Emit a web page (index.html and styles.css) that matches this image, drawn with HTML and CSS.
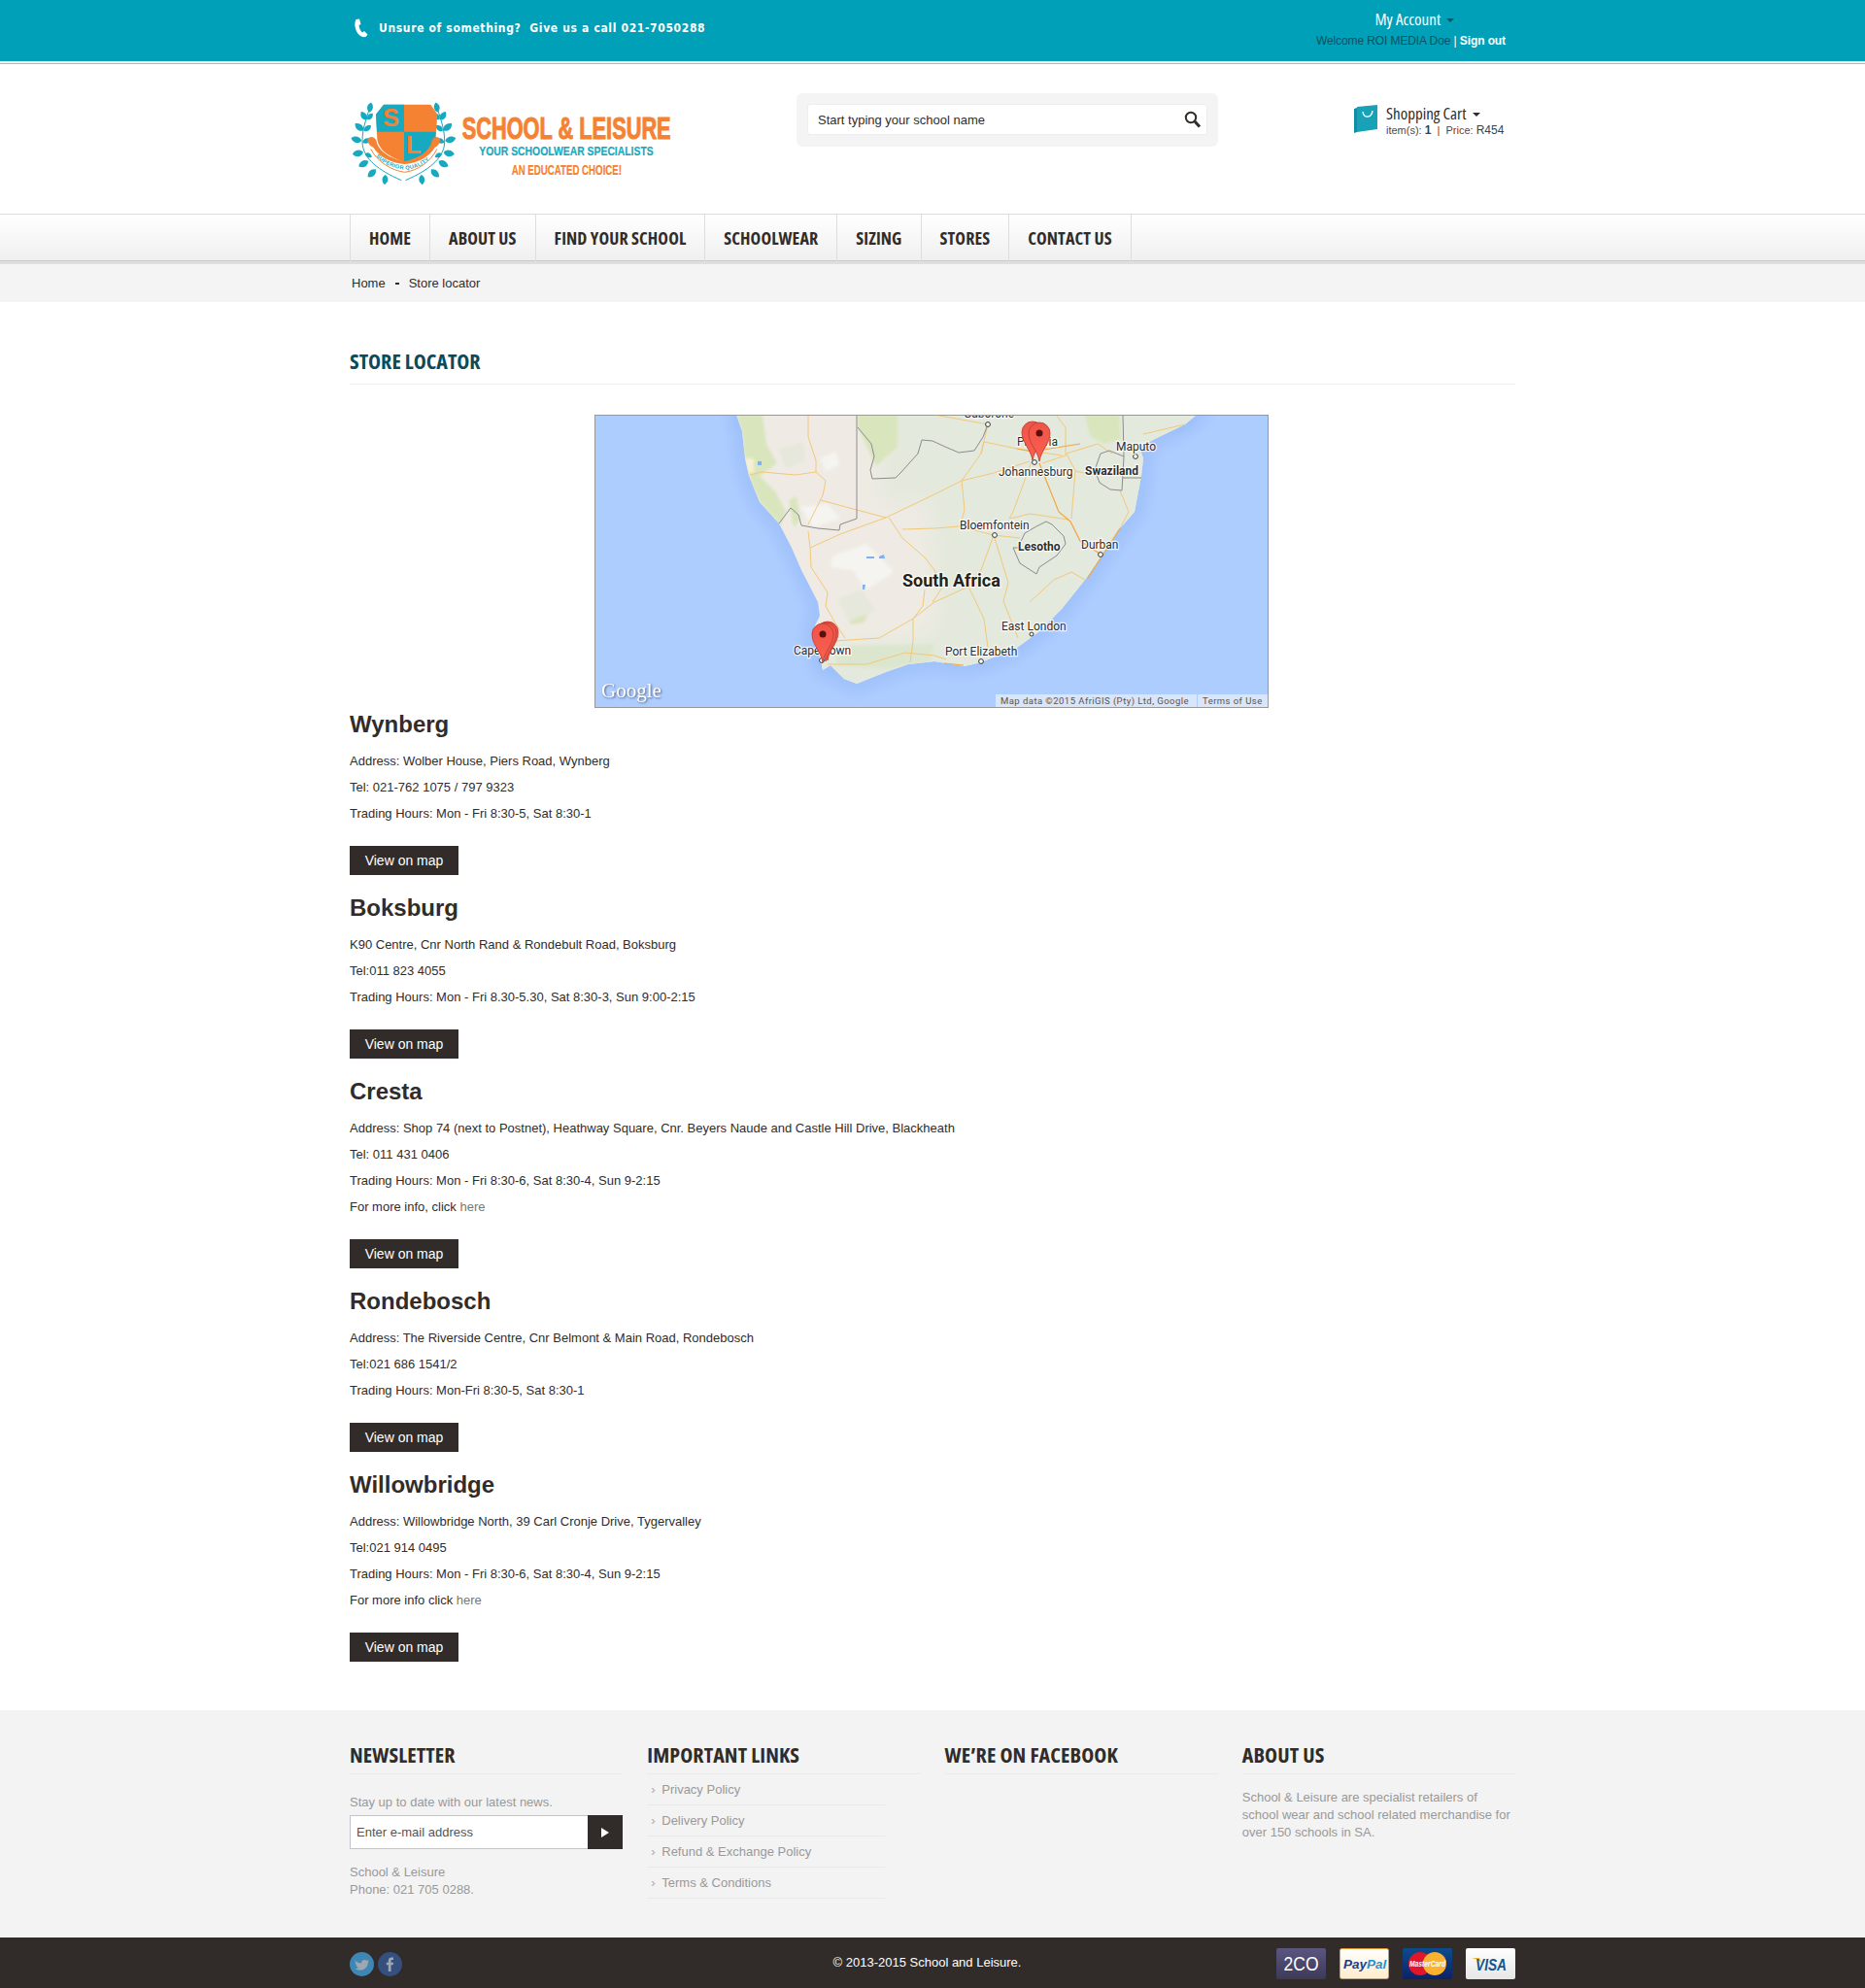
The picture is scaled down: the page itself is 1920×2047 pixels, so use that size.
FILE: index.html
```
<!DOCTYPE html>
<html lang="en">
<head>
<meta charset="utf-8">
<title>Store locator - School &amp; Leisure</title>
<link rel="stylesheet" href="styles.css">
</head>
<body>
<div class="topbar">
  <div class="wrap topbar-in">
    <div class="call">
      <svg class="phone" width="16" height="20" viewBox="0 0 16 20"><path d="M2.5 1 L6 0.5 L7.5 6 L5.5 7 C5.8 10 7 12.5 9 14.5 L11 13 L14.5 16.5 L12.5 19 C8 20 3.5 16 2 10.5 C1 7 1.2 3.5 2.5 1Z"/></svg>
      <span>Unsure of something?&nbsp; Give us a call 021-7050288</span>
    </div>
    <div class="account">
      <div class="acc-title">My Account <i class="caret caret-dark"></i></div>
      <div class="acc-line">Welcome ROI MEDIA Doe <span class="sep">|</span> <a class="signout">Sign out</a></div>
    </div>
  </div>
</div>

<header class="wrap head">
  <svg class="logo" width="345" height="105" viewBox="0 0 1035 315">
    <defs>
      <path id="leaf" d="M0 0 C8 -14 24 -14 34 0 C24 12 8 12 0 0Z"/>
      <g id="branch">
        <path class="logo-stem" d="M78 45 C65 85 50 125 55 165 C62 205 100 240 175 272"/>
        <use href="#leaf" transform="translate(76 62) rotate(-80) scale(.9)"/>
        <use href="#leaf" transform="translate(68 85) rotate(-125) scale(.9)"/>
        <use href="#leaf" transform="translate(70 85) rotate(-50) scale(.75)"/>
        <use href="#leaf" transform="translate(58 118) rotate(-140)"/>
        <use href="#leaf" transform="translate(60 120) rotate(-40) scale(.8)"/>
        <use href="#leaf" transform="translate(52 150) rotate(-165)"/>
        <use href="#leaf" transform="translate(55 155) rotate(-20) scale(.8)"/>
        <use href="#leaf" transform="translate(57 185) rotate(170)"/>
        <use href="#leaf" transform="translate(62 190) rotate(25) scale(.7)"/>
        <use href="#leaf" transform="translate(72 212) rotate(150)"/>
        <use href="#leaf" transform="translate(95 238) rotate(135)"/>
        <use href="#leaf" transform="translate(125 255) rotate(95) scale(.9)"/>
      </g>
    </defs>
    <g class="logo-teal"><use href="#branch"/><use href="#branch" transform="translate(362 0) scale(-1 1)"/></g>
    <path class="logo-orange" d="M96 68 L120 38 L265 38 L286 68 L280 145 C275 185 220 205 185 216 C150 205 105 185 100 145Z"/>
    <path class="logo-teal" d="M96 68 L120 38 L183 38 L183 122 L99 122Z"/>
    <path class="logo-teal" d="M183 122 L281 122 L280 145 C275 185 220 205 183 216Z"/>
    <text class="logo-sl" x="142" y="105">S</text>
    <text class="logo-sl" x="212" y="190">L</text>
    <path class="logo-band" d="M78 150 C90 200 140 232 185 240 C230 232 276 200 288 150 L268 175 C250 200 215 212 185 216 C155 212 120 200 96 175Z"/>
    <path class="logo-ribbon" d="M70 150 C70 134 94 134 98 152 C104 185 150 208 185 213 C220 208 262 185 268 152 C272 134 294 134 294 150 C292 160 286 168 278 170 C262 200 220 220 185 222 C150 220 105 200 88 170 C80 168 72 160 70 150Z"/>
    <path class="logo-line" d="M80 175 C100 215 145 242 185 247 C225 242 265 215 285 175"/>
    <path id="ribbon-arc" class="logo-none" d="M92 193 C118 222 150 236 185 239 C222 236 252 222 276 192"/>
    <text class="logo-sq"><textPath href="#ribbon-arc" startOffset="3%">SUPERIOR QUALITY</textPath></text>
    <text class="logo-t1" x="362" y="143" textLength="645" lengthAdjust="spacingAndGlyphs">SCHOOL &amp; LEISURE</text>
    <text class="logo-t2" x="415" y="195" textLength="538" lengthAdjust="spacingAndGlyphs">YOUR SCHOOLWEAR SPECIALISTS</text>
    <text class="logo-t3" x="515" y="255" textLength="340" lengthAdjust="spacingAndGlyphs">AN EDUCATED CHOICE!</text>
  </svg>
  <div class="search">
    <div class="search-field">
      <span>Start typing your school name</span>
      <svg width="18" height="18" viewBox="0 0 18 18"><circle class="s-ring" cx="7" cy="7" r="5.2"/><path class="s-handle" d="M11 11 L16 16.5"/></svg>
    </div>
  </div>
  <div class="cart">
    <svg class="bag" width="26" height="30" viewBox="0 0 26 30">
      <path class="bag-side" d="M0 5 L3 4 L3 29 L0 30Z"/>
      <path class="bag-main" d="M3 3 L24 1 L24 26 L3 29Z"/>
      <path class="bag-handle" d="M9 8 C10 15 18 15 19 7"/>
    </svg>
    <div>
      <div class="cart-title">Shopping Cart <i class="caret"></i></div>
      <div class="cart-line">item(s): <b>1</b> &nbsp;|&nbsp; Price: <strong>R454</strong></div>
    </div>
  </div>
</header>

<nav class="nav">
  <ul class="wrap nav-list">
    <li>HOME</li><li>ABOUT US</li><li>FIND YOUR SCHOOL</li><li>SCHOOLWEAR</li><li>SIZING</li><li>STORES</li><li>CONTACT US</li>
  </ul>
</nav>
<div class="crumbs"><div class="wrap crumbs-in"><span>Home</span><i class="crumb-dot"></i><span>Store locator</span></div></div>

<main class="wrap main">
  <h1 class="page-title">STORE LOCATOR</h1>
  <svg class="map" width="694" height="302" viewBox="0 0 694 302">
    <defs>
      <path id="land" d="M146 0 L152 17 L155 45 L159 63 L170 90 L190 112 L203 137 L213 160 L230 193 L232 207 L227 217 L225 230 L233 253 L235 263 L243 258 L257 272 L270 277 L300 265 L323 257 L350 254 L381 259 L398 255 L435 240 L458 223 L481 200 L505 170 L521 147 L541 117 L556 100 L563 63 L565 45 L561 33 L581 23 L608 10 L620 0Z"/>
      <clipPath id="landclip"><use href="#land"/></clipPath>
      <filter id="glow" x="-20%" y="-20%" width="140%" height="140%"><feGaussianBlur stdDeviation="9"/></filter>
      <filter id="soft" x="-10%" y="-10%" width="120%" height="120%"><feGaussianBlur stdDeviation="1.4"/></filter>
      <filter id="softer" x="-10%" y="-10%" width="120%" height="120%"><feGaussianBlur stdDeviation="12"/></filter>
      <linearGradient id="pinfill" x1="0" y1="0" x2="0" y2="1"><stop offset="0" stop-color="#ee5548"/><stop offset="1" stop-color="#fb5f50"/></linearGradient>
      <g id="pin"><path class="pin" d="M0 0 C-2 -12 -11 -18 -11 -29 A11 11 0 1 1 11 -29 C11 -18 2 -12 0 0Z"/><circle class="pin-dot" cx="0" cy="-29" r="3.5"/></g>
    </defs>
    <rect class="m-water" width="694" height="302"/>
    <use href="#land" class="m-glow" filter="url(#glow)"/>
    <use href="#land" class="m-land"/>
    <g clip-path="url(#landclip)">
      <path class="m-east" filter="url(#softer)" d="M295 -40 L295 95 L345 85 L350 175 L355 215 L330 232 L220 240 L225 340 L720 340 L720 -40Z"/>
      <g filter="url(#soft)">
        <path class="m-green" d="M146 0 L173 0 L177 30 L188 50 L170 63 L187 80 L197 100 L192 114 L170 90 L159 63 L155 45 L152 17Z"/>
        <path class="m-green" d="M271 0 L312 0 L312 33 L290 53 L271 13Z"/>
        <path class="m-green" d="M505 0 L540 0 L542 25 L525 30 L510 22Z"/>
        <path class="m-green" d="M200 88 L208 84 L212 108 L205 116Z"/>
        <path class="m-green" d="M260 208 L282 203 L278 214 L264 216Z"/>
        <path class="m-green2" d="M245 238 L350 236 L345 254 L300 262 L250 258Z"/>
        <path class="m-white" d="M245 146 L280 133 L308 162 L280 180 L266 160 L243 157Z"/>
        <path class="m-white" d="M212 95 L240 92 L253 107 L225 116Z"/>
        <path class="m-white" d="M233 45 L248 38 L252 52 L238 58Z"/>
        <path class="m-dim" d="M190 35 L215 28 L218 48 L196 55Z"/>
        <path class="m-dim" d="M250 190 L275 180 L290 202 L262 212Z"/>
        <path class="m-yellow" d="M155 45 L164 45 L164 60 L159 60Z"/>
      </g>
      <path class="m-lake" d="M168 48 L172 48 L172 52 L168 52Z"/>
      <path class="m-lake" d="M280 146 L288 146 L288 148 L280 148Z"/>
      <path class="m-lake" d="M293 146 L298 144 L299 148 L293 148Z"/>
      <path class="m-lake" d="M276 175 L279 175 L278 180 L276 180Z"/>
    </g>
    <g class="m-road">
      <path d="M160 62 L172 59 L207 62 L228 59 L238 68 L235 83 L220 113"/>
      <path d="M220 0 L220 23 L228 47 L228 59"/>
      <path d="M233 88 L270 98 L300 106 L350 82 L378 68 L411 60 L448 48"/>
      <path d="M222 137 L253 123 L300 106"/>
      <path d="M220 120 L222 137 L223 157 L240 183 L238 197 L247 213 L258 230"/>
      <path d="M303 106 L317 127 L340 147 L350 160 L358 178 L348 193"/>
      <path d="M317 118 L350 117 L376 115 L411 124 L438 127"/>
      <path d="M247 233 L293 230 L328 210 L350 193 L385 177"/>
      <path d="M328 210 L328 233 L325 255"/>
      <path d="M340 180 L338 197 L328 210"/>
      <path d="M240 257 L280 257 L320 245 L350 248 L362 252"/>
      <path d="M378 68 L381 98 L376 115"/>
      <path d="M450 48 L431 100 L427 107"/>
      <path d="M428 107 L448 102 L488 108"/>
      <path d="M411 124 L398 160 L385 177 L401 210 L406 247"/>
      <path d="M411 124 L423 163 L426 173 L421 192 L436 230"/>
      <path d="M448 193 L473 170 L491 162 L505 170"/>
      <path d="M541 117 L550 100 L541 78"/>
      <path d="M486 40 L518 30 L533 40"/>
      <path d="M461 50 L485 42 L485 13 L475 0"/>
      <path d="M486 40 L495 58 L491 107"/>
      <path d="M398 40 L378 68"/>
      <path d="M495 58 L518 63"/>
      <path d="M565 20 L608 10"/>
      <path d="M405 10 L398 40 L401 28 L435 35 L481 42"/>
      <path d="M350 0 L405 10"/>
    </g>
    <g class="m-road2">
      <path d="M458 50 L478 100 L490 110 L500 130 L520 143"/>
      <path d="M508 168 L541 117"/>
      <path d="M435 35 L450 38 L500 30"/>
      <path d="M360 256 L380 258"/>
    </g>
    <g class="m-border">
      <path d="M270 0 L270 107 L253 113 L252 119 L230 117 L213 114 L210 103 L202 96 L190 112"/>
      <path d="M271 13 L285 30 L288 43 L284 57 L286 66 L310 65 L315 60 L333 40 L337 26 L348 27 L361 33 L375 39 L391 37 L400 23 L405 10"/>
      <path d="M544 0 L545 43 L530 37 L521 40 L515 57 L520 70 L531 77 L543 78 L545 43 M544 65 L563 65"/>
      <path d="M465 110 L455 115 L443 122 L436 137 L431 137 L438 153 L455 164 L458 157 L476 145 L485 133 L483 125 L471 113Z"/>
    </g>
    <g class="m-town">
      <circle cx="405" cy="10" r="2.4"/><circle cx="453" cy="49" r="2.4"/><circle cx="557" cy="43" r="2.4"/><circle cx="412" cy="124" r="2.4"/><circle cx="521" cy="144" r="2.4"/><circle cx="450" cy="226" r="2"/><circle cx="398" cy="254" r="2.4"/><circle cx="234" cy="253" r="2.4"/>
    </g>
    <g class="m-label">
      <text x="380" y="3">Gaborone</text>
      <text x="435" y="32">Pretoria</text>
      <text x="416" y="63">Johannesburg</text>
      <text x="537" y="37">Maputo</text>
      <text x="376" y="118">Bloemfontein</text>
      <text x="501" y="138">Durban</text>
      <text x="419" y="222">East London</text>
      <text x="361" y="248">Port Elizabeth</text>
      <text x="205" y="247">Cape Town</text>
      <text class="m-b" x="505" y="62">Swaziland</text>
      <text class="m-b" x="436" y="140">Lesotho</text>
      <text class="m-sa" x="317" y="177">South Africa</text>
    </g>
    <use href="#pin" transform="translate(240 253)"/>
    <use href="#pin" transform="translate(238 254)"/>
    <use href="#pin" transform="translate(235 255)"/>
    <use href="#pin" transform="translate(451 47)"/>
    <use href="#pin" transform="translate(458 48)"/>
    <text class="m-google" x="7" y="291">Google</text>
    <rect class="m-attr" x="413" y="288" width="207" height="13"/>
    <rect class="m-attr" x="621" y="288" width="72" height="13"/>
    <text class="m-attr-t" x="418" y="298">Map data ©2015 AfriGIS (Pty) Ltd, Google</text>
    <text class="m-attr-t" x="626" y="298">Terms of Use</text>
    <rect class="m-frame" x=".5" y=".5" width="693" height="301"/>
  </svg>

  <section class="store">
    <h2>Wynberg</h2>
    <p>Address: Wolber House, Piers Road, Wynberg</p>
    <p>Tel: 021-762 1075 / 797 9323</p>
    <p>Trading Hours: Mon - Fri 8:30-5, Sat 8:30-1</p>
    <a class="btn">View on map</a>
  </section>
  <section class="store">
    <h2>Boksburg</h2>
    <p>K90 Centre, Cnr North Rand &amp; Rondebult Road, Boksburg</p>
    <p>Tel:011 823 4055</p>
    <p>Trading Hours: Mon - Fri 8.30-5.30, Sat 8:30-3, Sun 9:00-2:15</p>
    <a class="btn">View on map</a>
  </section>
  <section class="store">
    <h2>Cresta</h2>
    <p>Address: Shop 74 (next to Postnet), Heathway Square, Cnr. Beyers Naude and Castle Hill Drive, Blackheath</p>
    <p>Tel: 011 431 0406</p>
    <p>Trading Hours: Mon - Fri 8:30-6, Sat 8:30-4, Sun 9-2:15</p>
    <p>For more info, click <a class="here">here</a></p>
    <a class="btn">View on map</a>
  </section>
  <section class="store">
    <h2>Rondebosch</h2>
    <p>Address: The Riverside Centre, Cnr Belmont &amp; Main Road, Rondebosch</p>
    <p>Tel:021 686 1541/2</p>
    <p>Trading Hours: Mon-Fri 8:30-5, Sat 8:30-1</p>
    <a class="btn">View on map</a>
  </section>
  <section class="store">
    <h2>Willowbridge</h2>
    <p>Address: Willowbridge North, 39 Carl Cronje Drive, Tygervalley</p>
    <p>Tel:021 914 0495</p>
    <p>Trading Hours: Mon - Fri 8:30-6, Sat 8:30-4, Sun 9-2:15</p>
    <p>For more info click <a class="here">here</a></p>
    <a class="btn">View on map</a>
  </section>
</main>

<footer class="foot">
  <div class="wrap foot-grid">
    <div>
      <h3>NEWSLETTER</h3>
      <p class="news-intro">Stay up to date with our latest news.</p>
      <div class="news-form"><span>Enter e-mail address</span><b class="news-go"><i></i></b></div>
      <p class="news-addr">School &amp; Leisure<br>Phone: 021 705 0288.</p>
    </div>
    <div>
      <h3>IMPORTANT LINKS</h3>
      <ul class="links">
        <li>Privacy Policy</li><li>Delivery Policy</li><li>Refund &amp; Exchange Policy</li><li>Terms &amp; Conditions</li>
      </ul>
    </div>
    <div>
      <h3>WE’RE ON FACEBOOK</h3>
    </div>
    <div>
      <h3>ABOUT US</h3>
      <p class="about">School &amp; Leisure are specialist retailers of school wear and school related merchandise for over 150 schools in SA.</p>
    </div>
  </div>
</footer>
<div class="bottom">
  <div class="wrap bottom-in">
    <div class="social">
      <svg width="25" height="25" viewBox="0 0 25 25"><circle class="tw" cx="12.5" cy="12.5" r="12.5"/><path class="soc-g" d="M5 8 C7 10 9 11.5 12 11.5 C12 8.5 15 7 17.3 8.8 L19.5 8 L18.5 10 L20 9.7 L18.7 11.2 C18.7 15 15.5 18.5 11 18.5 C9 18.5 7 18 5.5 17 C7.2 17 8.6 16.6 9.5 15.8 C8 15.7 7 14.8 6.5 13.7 L8 13.6 C6.5 13 5.6 11.8 5.6 10.4 L7 10.8 C5.8 10 5.2 9 5 8Z"/></svg>
      <svg width="25" height="25" viewBox="0 0 25 25"><circle class="fb" cx="12.5" cy="12.5" r="12.5"/><path class="soc-g" d="M10.8 20 V13.3 H8.8 V10.8 H10.8 V9 C10.8 6.8 12 5.6 14 5.6 H16 V8.1 H14.7 C13.8 8.1 13.5 8.5 13.5 9.3 V10.8 H16 L15.6 13.3 H13.5 V20Z"/></svg>
    </div>
    <div class="copy">© 2013-2015 School and Leisure.</div>
    <div class="pays">
      <svg width="51" height="32" viewBox="0 0 51 32"><defs><linearGradient id="g2co" x1="0" y1="0" x2="0" y2="1"><stop offset="0" stop-color="#5a5680"/><stop offset="1" stop-color="#3d3958"/></linearGradient></defs><rect class="p-2co" width="51" height="32" rx="2"/><text class="p-2co-t" x="7.5" y="23" textLength="36" lengthAdjust="spacingAndGlyphs">2CO</text></svg>
      <svg width="51" height="32" viewBox="0 0 51 32"><defs><linearGradient id="gpp" x1="0" y1="0" x2="0" y2="1"><stop offset="0" stop-color="#ffffff"/><stop offset="1" stop-color="#ffeccb"/></linearGradient></defs><rect class="p-pp" x=".5" y=".5" width="50" height="31" rx="2"/><text class="p-pp-t" x="4" y="21">Pay<tspan class="p-pal">Pal</tspan></text></svg>
      <svg width="51" height="32" viewBox="0 0 51 32"><defs><linearGradient id="gmc" x1="0" y1="0" x2="0" y2="1"><stop offset="0" stop-color="#0c4c8c"/><stop offset="1" stop-color="#0c2268"/></linearGradient></defs><rect class="p-mc" width="51" height="32" rx="2"/><circle class="p-mc-r" cx="18" cy="16" r="12"/><circle class="p-mc-y" cx="33" cy="16" r="12"/><text class="p-mc-t" x="7" y="19" textLength="37" lengthAdjust="spacingAndGlyphs">MasterCard</text></svg>
      <svg width="51" height="32" viewBox="0 0 51 32"><defs><linearGradient id="gvi" x1="0" y1="0" x2="0" y2="1"><stop offset="0" stop-color="#ffffff"/><stop offset="1" stop-color="#e6e6e6"/></linearGradient></defs><rect class="p-vi" width="51" height="32" rx="2"/><path class="p-vi-y" d="M6 10 L14 10 L17 16 C15 13 11 11 6 10Z"/><text class="p-vi-t" x="10" y="23" textLength="32" lengthAdjust="spacingAndGlyphs">VISA</text></svg>
    </div>
  </div>
</div>
</body>
</html>
```
FILE: styles.css
```
* { box-sizing: border-box; }
html, body { margin: 0; padding: 0; }
body { background: #fff; color: #312c29; font-family: "Liberation Sans", Arial, sans-serif; font-size: 13px; }
ul { list-style: none; margin: 0; padding: 0; }
h1, h2, h3, p { margin: 0; }
.wrap { width: 1200px; margin-left: auto; margin-right: auto; }

.topbar { height: 66px; background: #00a0b8; border-bottom: 1px solid #b5b5b5; box-shadow: inset 0 -2px 0 #fff; }
.topbar-in { display: flex; justify-content: space-between; height: 63px; }
.call { display: flex; align-items: center; padding: 0 0 5px 4px; color: #fff; font-family: "DejaVu Sans", sans-serif; font-stretch: condensed; font-weight: 700; font-size: 12px; letter-spacing: .65px; }
.phone { margin-right: 10px; fill: #fff; }
.account { padding: 9px 10px 0 0; text-align: center; }
.acc-title, .cart-title, .nav-list li, .page-title, .foot h3 { font-family: "Open Sans", sans-serif; font-stretch: 75%; }
.acc-title { color: #fff; font-size: 17px; line-height: 22px; padding-left: 8px; }
.acc-line { color: #12505e; font-size: 12px; line-height: 18px; margin-top: 2px; letter-spacing: -.1px; }
.sep { color: #fff; }
.signout { color: #fff; font-weight: 700; }
.caret { display: inline-block; width: 0; height: 0; margin-left: 3px; vertical-align: middle; border-left: 4px solid transparent; border-right: 4px solid transparent; border-top: 4px solid #312c29; }
.caret-dark { border-top-color: #12505e; }

.head { position: relative; height: 154px; display: flex; align-items: flex-start; }
.logo { margin: 29px 0 0 -5px; flex: none; }
.logo-teal { fill: #17a9bf; }
.logo-orange, .logo-ribbon { fill: #f58233; }
.logo-band { fill: #fff; }
.logo-line { fill: none; stroke: #f58233; stroke-width: 3; }
.logo-stem { fill: none; stroke: #17a9bf; stroke-width: 3; }
.logo-sl { fill: #f58233; font: 700 76px "Liberation Sans", sans-serif; text-anchor: middle; }
.logo-none { fill: none; }
.logo-sq { fill: #17a9bf; font: 700 17px "Liberation Sans", sans-serif; letter-spacing: 1px; }
.logo-t1 { fill: #f58233; stroke: #f58233; stroke-width: 3; font: 700 92px "Liberation Sans", sans-serif; }
.logo-t2 { fill: #17a9bf; stroke: #17a9bf; stroke-width: .6; font: 700 39px "Liberation Sans", sans-serif; }
.logo-t3 { fill: #f58233; stroke: #f58233; stroke-width: .6; font: 700 44px "Liberation Sans", sans-serif; }
.search { margin: 30px 0 0 120px; width: 434px; height: 55px; padding: 11px; background: #f4f4f4; border-radius: 6px; flex: none; }
.search-field { height: 32px; display: flex; align-items: center; justify-content: space-between; padding: 1px 5px 0 10px; background: #fff; border: 1px solid #eee; border-radius: 3px; color: #312c29; font-size: 13px; }
.search-field svg { margin-top: -2px; }
.s-ring { fill: none; stroke: #312c29; stroke-width: 2; }
.s-handle { fill: none; stroke: #312c29; stroke-width: 3; }
.cart { display: flex; gap: 7px; margin: 41px 0 0 140px; flex: none; }
.bag { flex: none; }
.bag-main { fill: #17a2b8; }
.bag-side { fill: #0e8fa3; }
.bag-handle { fill: none; stroke: #fff; stroke-width: 1.4; }
.cart-title { font-size: 17px; line-height: 20px; }
.cart-line { font-size: 11px; line-height: 14px; white-space: nowrap; color: #4b4b4b; }
.cart-line b { color: #1b4d5c; font-size: 12px; }
.cart-line strong { color: #1b4d5c; font-weight: 400; font-size: 12px; }

.nav { height: 52px; border-top: 1px solid #ddd; border-bottom: 3px solid #dfdfdf; background: linear-gradient(#fff, #efefef); box-shadow: inset 0 -1px 0 #c9c9c9; }
.nav-list { display: flex; height: 48px; border-left: 1px solid #ddd; }
.nav-list li { display: flex; align-items: center; padding: 0 19px; border-right: 1px solid #ddd; font-weight: 700; font-size: 18px; letter-spacing: .1px; color: #312c29; }

.crumbs { background: #f4f4f4; height: 39px; }
.crumbs-in { display: flex; align-items: center; gap: 10px; height: 39px; padding-left: 2px; font-size: 13px; }
.crumb-dot { width: 4px; height: 2px; background: #312c29; }

.main { padding-bottom: 50px; }
.page-title { margin-top: 47px; height: 38px; border-bottom: 1px solid #eee; color: #0b4a58; font-size: 22px; line-height: 26px; font-weight: 700; }
.map { display: block; margin: 31px 0 4px 252px; }

.m-water { fill: #aecdff; }
.m-glow { fill: none; stroke: #94b9f8; stroke-width: 12; }
.m-land { fill: #efebe4; }
.m-east { fill: #e3e9dc; }
.m-green { fill: #d9e5bd; }
.m-green2 { fill: #dce6cf; }
.m-white { fill: #f5f4f1; }
.m-dim { fill: #e6e8dc; }
.m-yellow { fill: #f6f1d2; }
.m-lake { fill: #7fb0f5; }
.m-road path { fill: none; stroke: #f3c877; stroke-width: 1; }
.m-road2 path { fill: none; stroke: #f4a63f; stroke-width: 1.2; }
.m-border path { fill: none; stroke: #8c8c8c; stroke-width: 1; }
.m-town circle { fill: #fff; stroke: #333; stroke-width: 1; }
.m-label text { font: 400 12px Roboto, sans-serif; fill: #2e2e2e; stroke: rgba(255,255,255,.75); stroke-width: 2.5; paint-order: stroke; }
.m-label .m-b { font-weight: 700; }
.m-label .m-sa { font-weight: 700; font-size: 18px; fill: #222; }
.pin { fill: url(#pinfill); stroke: #b93a30; stroke-width: .8; }
.pin-dot { fill: #5b0f0b; }
.m-google { font: 400 21px "Liberation Serif", serif; fill: #fff; filter: drop-shadow(1px 1px 1px rgba(50,60,90,.75)); }
.m-attr { fill: #f5f5f5; fill-opacity: .6; }
.m-attr-t { font: 400 9.5px Roboto, sans-serif; letter-spacing: .45px; fill: #555; }
.m-frame { fill: none; stroke: #999; stroke-width: 1; }

.store { margin-bottom: 21px; }
.store:last-child { margin-bottom: 0; }
.store h2 { font-size: 24px; line-height: 26px; font-weight: 700; margin-bottom: 11px; }
.store p { font-size: 13px; line-height: 27px; }
.here { color: #777; }
.btn { display: block; width: 112px; height: 30px; margin-top: 20px; background: #312c29; color: #fff; font-size: 14px; line-height: 30px; text-align: center; }

.foot { height: 234px; padding-top: 33px; background: #f3f3f3; }
.foot-grid { display: grid; grid-template-columns: repeat(4, 1fr); column-gap: 25px; }
.foot h3 { height: 33px; border-bottom: 1px solid #eaeaea; font-size: 22px; line-height: 24px; letter-spacing: .1px; font-weight: 700; color: #312c29; }
.news-intro { margin-top: 20px; color: #999; line-height: 18px; }
.news-form { display: flex; justify-content: space-between; align-items: center; height: 35px; margin-top: 4px; padding-left: 6px; background: #fff; border: 1px solid #c3c3cc; border-right: 0; color: #555; }
.news-go { display: flex; align-items: center; justify-content: center; align-self: stretch; width: 36px; margin: -1px 0; background: #312c29; }
.news-go i { width: 0; height: 0; border-left: 8px solid #fff; border-top: 5.5px solid transparent; border-bottom: 5.5px solid transparent; }
.news-addr { margin-top: 15px; color: #999; line-height: 18px; }
.links { width: 245px; }
.links li { height: 32px; display: flex; align-items: center; border-bottom: 1px solid #e9e9e9; color: #999; }
.links li::before { content: "›"; box-sizing: border-box; width: 15px; padding-left: 4px; color: #aaa; }
.about { margin-top: 15px; color: #999; line-height: 18px; }

.bottom { height: 52px; background: #312c29; }
.bottom-in { display: grid; grid-template-columns: 1fr auto 1fr; align-items: center; height: 52px; }
.social { display: flex; gap: 4px; padding-top: 2px; }
.tw { fill: #3e87b5; }
.fb { fill: #35507f; }
.soc-g { fill: #9fa7b0; }
.copy { color: #fff; font-size: 13px; margin: 0 11px 2px 0; }
.pays { display: flex; justify-content: flex-end; gap: 14px; padding-top: 1px; }
.p-2co { fill: url(#g2co); }
.p-2co-t { font: 400 21px "Liberation Sans", sans-serif; fill: #fff; }
.p-pp { fill: url(#gpp); stroke: #e79a34; }
.p-pp-t { font: italic 700 13.5px "Liberation Sans", sans-serif; fill: #1a3f8f; }
.p-pal { fill: #2a8fd0; }
.p-mc { fill: url(#gmc); }
.p-mc-r { fill: #e0162b; }
.p-mc-y { fill: #fbb231; }
.p-mc-t { font: italic 700 9px "Liberation Sans", sans-serif; fill: #fff; }
.p-vi { fill: url(#gvi); }
.p-vi-y { fill: #f0b030; }
.p-vi-t { font: italic 700 17px "Liberation Sans", sans-serif; fill: #15558f; }
```
